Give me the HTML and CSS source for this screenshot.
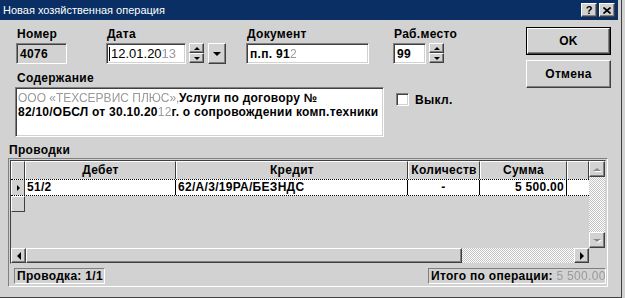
FILE: index.html
```html
<!DOCTYPE html>
<html lang="ru">
<head>
<meta charset="utf-8">
<title>Новая хозяйственная операция</title>
<link rel="stylesheet" href="styles.css">
</head>
<body>
<div class="window">
  <div class="titlebar">
    <span class="caption">Новая хозяйственная операция</span>
    <span class="tbtn raised">?</span>
    <span class="tbtn raised"><svg width="8" height="7" viewBox="0 0 8 7"><path d="M0.5 0.5 L7.5 6.5 M7.5 0.5 L0.5 6.5" stroke="#000" stroke-width="1.7"/></svg></span>
  </div>

  <div class="top">
    <div class="fields">
      <div class="row1">
        <div class="field f-num">
          <div class="lbl">Номер</div>
          <div class="box readonly num">4076</div>
        </div>
        <div class="field f-date">
          <div class="lbl">Дата</div>
          <div class="ctl">
            <div class="box edit date"><span class="caret"></span>12.01.20<span class="blur">13</span></div>
            <div class="spin">
              <div class="raised sb"><i class="tri-up"></i></div>
              <div class="raised sb"><i class="tri-down"></i></div>
            </div>
            <div class="raised drop"><i class="tri-down big"></i></div>
          </div>
        </div>
        <div class="field f-doc">
          <div class="lbl">Документ</div>
          <div class="box edit doc">п.п. 91<span class="blur">2</span></div>
        </div>
        <div class="field f-place">
          <div class="lbl">Раб.место</div>
          <div class="ctl">
            <div class="box edit place">99</div>
            <div class="spin tall">
              <div class="raised sb"><i class="tri-up"></i></div>
              <div class="raised sb"><i class="tri-down"></i></div>
            </div>
          </div>
        </div>
      </div>

      <div class="row2">
        <div class="memo-wrap">
          <div class="lbl">Содержание</div>
          <div class="box edit memo"><span class="blur lead">ООО «ТЕХСЕРВИС ПЛЮС»,</span>Услуги по договору №<br>82/10/ОБСЛ от 30.10.20<span class="blur">12</span>г. о сопровождении комп.техники</div>
        </div>
        <div class="check">
          <span class="checkbox"></span>
          <span>Выкл.</span>
        </div>
      </div>
    </div>

    <div class="buttons">
      <div class="btn default"><div class="raised">OK</div></div>
      <div class="btn raised">Отмена</div>
    </div>
  </div>

  <div class="lbl entries-lbl">Проводки</div>
  <div class="panel">
    <div class="grid">
      <div class="table">
        <div class="hrow">
          <div class="hc ind"></div>
          <div class="hc c-deb">Дебет</div>
          <div class="hc c-cred">Кредит</div>
          <div class="hc c-qty">Количеств</div>
          <div class="hc c-sum">Сумма</div>
          <div class="hc c-pad"></div>
        </div>
        <div class="drow">
          <div class="hc ind"><i class="tri-right"></i></div>
          <div class="dc c-deb">51/2</div>
          <div class="dc c-cred">62/А/3/19РА/БЕЗНДС</div>
          <div class="dc c-qty center">-</div>
          <div class="dc c-sum right">5 500.00</div>
          <div class="dc c-pad last"></div>
        </div>
        <div class="erow">
          <div class="hc ind"></div>
        </div>
      </div>
      <div class="vscroll">
        <div class="raised arrow"><i class="tri-up dim"></i></div>
        <div class="track"></div>
        <div class="raised arrow"><i class="tri-down dim"></i></div>
      </div>
      <div class="hscroll">
        <div class="raised harrow"><i class="tri-left"></i></div>
        <div class="raised thumb"></div>
        <div class="track"></div>
        <div class="raised harrow"><i class="tri-right"></i></div>
      </div>
      <div class="corner"></div>
    </div>
    <div class="status">
      <div class="cell">Проводка: 1/1</div>
      <div class="cell">Итого по операции: <span class="blur">5 500.00</span></div>
    </div>
  </div>
</div>
</body>
</html>
```

FILE: styles.css
```css
body {
  margin: 0;
  background: #d2d2d2;
  font-family: "Liberation Sans", Arial, sans-serif;
  font-size: 12px;
  font-weight: bold;
  letter-spacing: 0.3px;
  color: #000;
}

.window {
  width: 618px;
  height: 297px;
  padding-right: 3px;
  border-right: 1px solid #404040;
  border-bottom: 1px solid #404040;
  background: #d2d2d2;
}

/* 3d borders */
.raised {
  box-sizing: border-box;
  background: #d2d2d2;
  border: 1px solid;
  border-color: #fff #404040 #404040 #fff;
  box-shadow: inset -1px -1px #808080;
}

.box {
  box-sizing: border-box;
  border: 1px solid;
  border-color: #808080 #fff #fff #808080;
  box-shadow: inset 1px 1px #404040, inset -1px -1px #d2d2d2;
  background: #fff;
  height: 21px;
  padding: 3px 2px 0 3px;
  line-height: 14px;
  white-space: nowrap;
  overflow: hidden;
}

.box.readonly {
  background: #d2d2d2;
}

.blur {
  color: #9a9a9a;
  font-weight: normal;
  filter: blur(0.6px);
}

/* title */
.titlebar {
  height: 20px;
  background: #0a2f64;
  color: #fff;
  font-size: 11px;
  font-weight: normal;
  letter-spacing: 0;
  display: flex;
  align-items: center;
  padding: 0 3px 0 3px;
}

.titlebar .caption {
  flex: 1;
}

.tbtn {
  width: 16px;
  height: 14px;
  display: flex;
  align-items: center;
  justify-content: center;
  color: #000;
  font-size: 11px;
  font-weight: bold;
}

.tbtn + .tbtn {
  margin-left: 2px;
}

/* top area */
.top {
  display: flex;
  margin-top: 7px;
}

.fields {
  margin-left: 16px;
  padding-top: 1px;
}

.lbl {
  height: 13px;
  line-height: 13px;
  padding-left: 1px;
  margin-bottom: 2px;
}

.row1 {
  display: flex;
}

.f-num { width: 90px; }
.f-date { width: 140px; }
.f-doc { width: 147px; }

.num { width: 51px; }
.doc { width: 123px; }
.place { width: 33px; }

.ctl {
  display: flex;
}

.date {
  width: 80px;
  font-weight: normal;
  font-size: 13px;
  letter-spacing: 0;
  padding-left: 2px;
}

.caret {
  display: inline-block;
  width: 1px;
  height: 14px;
  background: #000;
  vertical-align: -3px;
  margin-right: 1px;
}

.spin {
  width: 15px;
  margin-left: 3px;
  display: flex;
  flex-direction: column;
}

.spin .sb {
  height: 10px;
  display: flex;
  align-items: center;
  justify-content: center;
}

.drop {
  width: 18px;
  height: 21px;
  margin-left: 4px;
  display: flex;
  align-items: center;
  justify-content: center;
}

.tri-up, .tri-down, .tri-left, .tri-right {
  display: block;
  width: 0;
  height: 0;
}

.tri-up {
  border-left: 3px solid transparent;
  border-right: 3px solid transparent;
  border-bottom: 3px solid #000;
}

.tri-down {
  border-left: 3px solid transparent;
  border-right: 3px solid transparent;
  border-top: 3px solid #000;
}

.tri-down.big {
  border-left-width: 4px;
  border-right-width: 4px;
  border-top-width: 4px;
}

.tri-left {
  border-top: 4px solid transparent;
  border-bottom: 4px solid transparent;
  border-right: 4px solid #000;
}

.tri-right {
  border-top: 4px solid transparent;
  border-bottom: 4px solid transparent;
  border-left: 4px solid #000;
}

.tri-up.dim, .tri-down.dim {
  border-left-width: 4px;
  border-right-width: 4px;
  border-bottom-color: #8a8a8a;
  border-top-color: #8a8a8a;
  filter: drop-shadow(1px 1px 0 #fff);
}

.row2 {
  display: flex;
  margin-top: 8px;
}

.memo {
  width: 369px;
  height: 50px;
  margin-left: -1px;
  margin-top: 1px;
  padding: 3px 0 0 2px;
  letter-spacing: 0.25px;
  white-space: nowrap;
}

.blur.lead {
  display: inline-block;
  width: 161px;
  letter-spacing: 0;
}

.check {
  display: flex;
  align-items: center;
  margin-left: 12px;
  margin-top: 20px;
  height: 15px;
}

.checkbox {
  width: 13px;
  height: 13px;
  box-sizing: border-box;
  border: 1px solid;
  border-color: #808080 #fff #fff #808080;
  box-shadow: inset 1px 1px #404040, inset -1px -1px #d2d2d2;
  background: #fff;
  margin-right: 6px;
}

.buttons {
  margin-left: auto;
  margin-right: 7px;
  width: 85px;
}

.btn {
  height: 28px;
  box-sizing: border-box;
  display: flex;
  align-items: center;
  justify-content: center;
}

.btn.default {
  border: 1px solid #000;
}

.btn.default .raised {
  width: 100%;
  height: 100%;
  display: flex;
  align-items: center;
  justify-content: center;
}

.btn + .btn {
  margin-top: 5px;
}

/* entries */
.entries-lbl {
  margin: 7px 0 1px 8px;
}

.panel {
  box-sizing: border-box;
  margin-left: 8px;
  width: 600px;
  height: 129px;
  border: 1px solid;
  border-color: #808080 #fff #fff #808080;
  padding: 1px 1px 2px 1px;
}

.grid {
  border: 1px solid;
  border-color: #404040 #d2d2d2 #d2d2d2 #404040;
  display: grid;
  grid-template-columns: 1fr 16px;
  grid-template-rows: 87px 15px;
}

.table {
  overflow: hidden;
}

.hrow, .drow, .erow {
  display: flex;
}

.hc {
  box-sizing: border-box;
  height: 18px;
  border-left: 1px solid #fff;
  border-top: 1px solid #fff;
  border-right: 1px solid #404040;
  text-align: center;
  line-height: 16px;
  white-space: nowrap;
  overflow: hidden;
}

.ind { width: 14px; flex: none; }
.c-deb { width: 151px; }
.c-cred { width: 232px; }
.c-qty { width: 72px; }
.c-sum { width: 87px; }
.c-pad { width: 22px; }

.drow {
  height: 17px;
  border-top: 1px dotted #000;
  border-bottom: 1px dotted #000;
  box-sizing: border-box;
  width: 578px;
  background: #fff;
}

.drow .ind {
  height: 15px;
  border-top: 0;
  display: flex;
  align-items: center;
  justify-content: center;
  background: #d2d2d2;
}

.drow .ind .tri-right {
  border-top-width: 3px;
  border-bottom-width: 3px;
  border-left-width: 3px;
}

.dc {
  box-sizing: border-box;
  height: 15px;
  line-height: 15px;
  border-right: 1px solid #000;
  padding: 0 2px;
  white-space: nowrap;
  overflow: hidden;
}

.dc.last {
  border-right: 0;
}

.center { text-align: center; }
.right { text-align: right; }

.erow .ind {
  height: 16px;
  border-bottom: 1px solid #404040;
}

.vscroll {
  display: flex;
  flex-direction: column;
}

.vscroll .arrow {
  height: 16px;
  display: flex;
  align-items: center;
  justify-content: center;
}

.track {
  flex: 1;
  background-image: repeating-conic-gradient(#fff 0 25%, #c4c4c4 0 50%);
  background-size: 2px 2px;
}

.hscroll {
  display: flex;
}

.harrow {
  width: 15px;
  display: flex;
  align-items: center;
  justify-content: center;
}

.thumb {
  width: 436px;
}

.corner {
  background: #d2d2d2;
}

.status {
  display: flex;
  justify-content: space-between;
  margin-top: 4px;
  padding: 0 0 0 4px;
}

.status .cell {
  box-sizing: border-box;
  height: 16px;
  line-height: 14px;
  padding: 0 2px;
  border: 1px solid;
  border-color: #808080 #fff #fff #808080;
  white-space: nowrap;
}

.status .cell:first-child {
  width: 91px;
}

.status .cell:last-child {
  width: 178px;
}
```
